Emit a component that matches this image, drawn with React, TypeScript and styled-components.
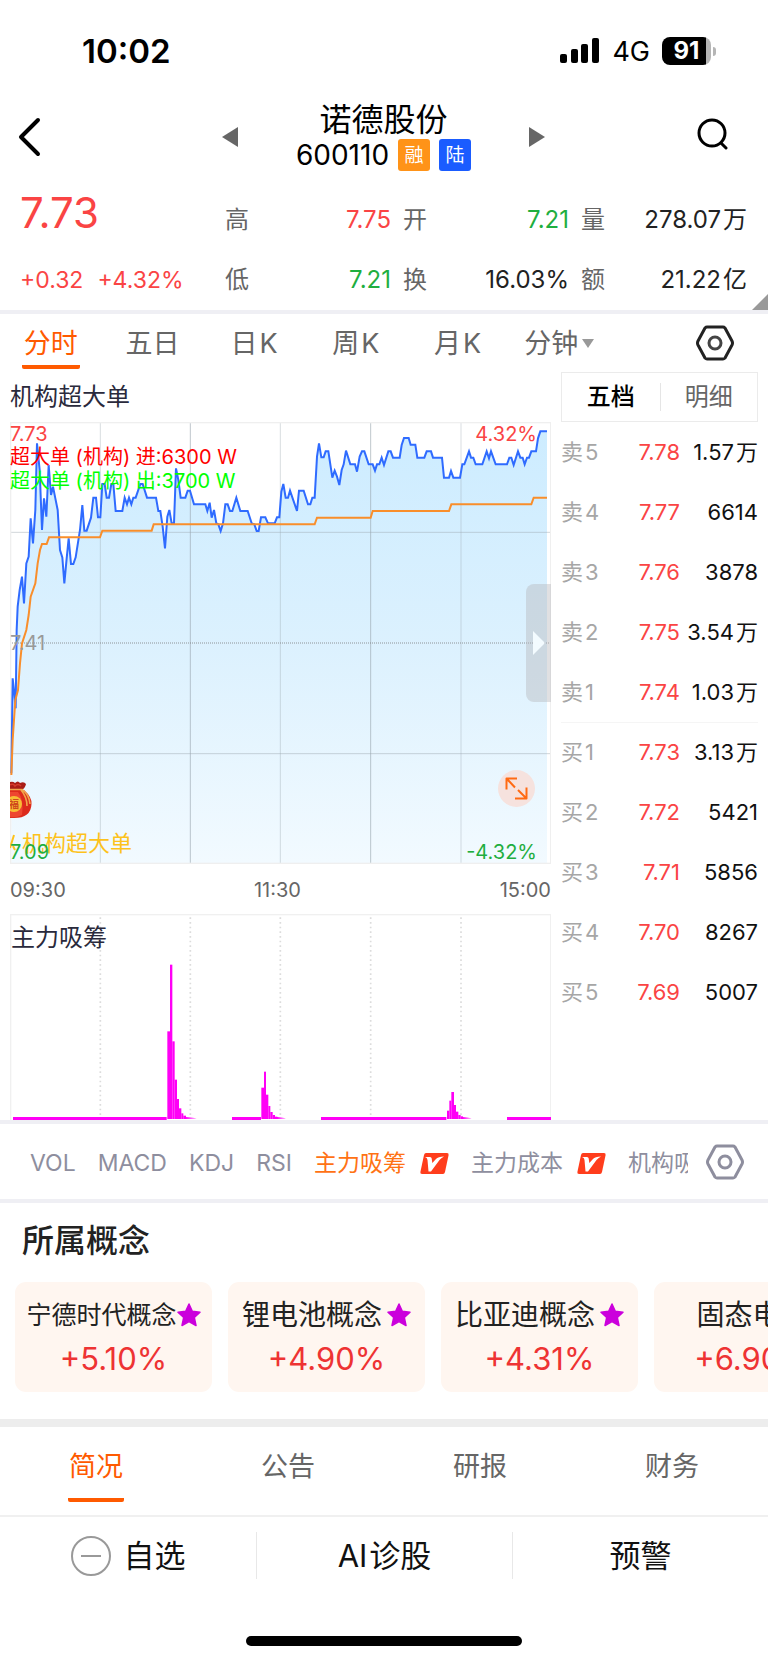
import React from "react";
import styled, { createGlobalStyle, css } from "styled-components";

const RED = "#fa4444";
const GREEN = "#1fae3f";
const ORANGE = "#ff5a00";
const GREY = "#666666";
const LINE = "#efeff4";

const GlobalStyle = createGlobalStyle`
  * { box-sizing: border-box; }
  body {
    margin: 0;
    background: #fff;
    color: #222;
    font-family: Inter, "Noto Sans CJK SC", sans-serif;
    font-size: 24px;
    line-height: 1;
  }
  button {
    border: 0;
    padding: 0;
    background: none;
    font: inherit;
    color: inherit;
    cursor: pointer;
  }
  svg { display: block; flex: none; }
`;

const Page = styled.div`
  display: flex;
  flex-direction: column;
  overflow-x: hidden;
`;

/* ---------- status bar ---------- */

const StatusBar = styled.div`
  display: flex;
  align-items: center;
  justify-content: space-between;
  height: 102px;
  padding: 0 57px 0 82px;
  color: #000;
`;

const Clock = styled.time`
  font-size: 33px;
  font-weight: 600;
`;

const StatusIcons = styled.div`
  display: flex;
  align-items: center;
  gap: 12px;
`;

const Network = styled.span`
  font-size: 27px;
`;

const Battery = styled.span`
  position: relative;
  display: flex;
  align-items: center;
  justify-content: center;
  width: 49px;
  height: 28px;
  border-radius: 8px;
  background: linear-gradient(90deg, #000 44px, #b5b5b5 44px);
  color: #fff;
  font-size: 24px;
  font-weight: 700;

  &::after {
    content: "";
    position: absolute;
    left: 51px;
    top: 10px;
    width: 3px;
    height: 9px;
    border-radius: 0 3px 3px 0;
    background: #b5b5b5;
  }
`;

/* ---------- title bar ---------- */

const TitleBar = styled.header`
  display: grid;
  grid-template-columns: 1fr 324px 1fr;
  align-items: center;
  height: 70px;
  padding: 0 39px 0 18px;
`;

const Stepper = styled.div`
  display: flex;
  align-items: center;
  justify-content: space-between;
  margin-left: 10px;
  margin-right: -10px;
`;

const TitleBlock = styled.div`
  display: flex;
  flex-direction: column;
  align-items: center;
  color: #000;
`;

const StockName = styled.h1`
  margin: 0;
  font-size: 32px;
  font-weight: 400;
  line-height: 36px;
`;

const CodeRow = styled.div`
  display: flex;
  align-items: center;
  gap: 9px;
  height: 34px;
  font-size: 28px;
`;

const Badge = styled.span<{ $color: string }>`
  display: flex;
  align-items: center;
  justify-content: center;
  width: 32px;
  height: 32px;
  border-radius: 3px;
  background: ${(p) => p.$color};
  color: #fff;
  font-size: 19px;
`;

const SearchButton = styled.button`
  justify-self: end;
  padding-bottom: 6px;
`;

/* ---------- quote ---------- */

const Quote = styled.section`
  position: relative;
  display: grid;
  grid-template-columns: 193px repeat(3, minmax(0, 1fr));
  column-gap: 12px;
  padding: 18px 21px 0 20px;
  border-bottom: 4px solid ${LINE};
`;

const PriceBlock = styled.div`
  display: flex;
  flex-direction: column;
  justify-content: space-between;
  color: ${RED};
`;

const Price = styled.strong`
  font-size: 42px;
  font-weight: 400;
  line-height: 46px;
`;

const Change = styled.span`
  display: flex;
  gap: 14px;
  font-size: 23px;
  line-height: 60px;
  white-space: nowrap;
`;

const Stats = styled.dl`
  margin: 0;
`;

const Stat = styled.div`
  display: flex;
  align-items: center;
  justify-content: space-between;
  height: 60px;
`;

const StatLabel = styled.dt`
  color: ${GREY};
`;

const StatValue = styled.dd<{ $color?: string }>`
  margin: 0;
  color: ${(p) => p.$color ?? "#222"};
`;

const Unit = styled.span`
  margin-left: 2px;
`;

const Corner = styled.span`
  position: absolute;
  right: 0;
  bottom: 0;
  border: solid transparent;
  border-width: 16px 0 0 16px;
  border-bottom: 16px solid #999;
  border-top: 0;
`;

/* ---------- period tabs ---------- */

const PeriodBar = styled.nav`
  display: grid;
  grid-template-columns: repeat(6, minmax(0, 1fr)) 124px;
  align-items: start;
  height: 58px;
  padding-right: 34px;
`;

const PeriodTab = styled.button<{ $active?: boolean }>`
  display: flex;
  align-items: center;
  justify-self: center;
  height: 55px;
  padding: 4px 2px 0;
  border-radius: 2px;
  font-size: 27px;
  white-space: nowrap;
  color: ${GREY};
  ${(p) =>
    p.$active &&
    css`
      color: ${ORANGE};
      background: linear-gradient(${ORANGE}, ${ORANGE}) bottom / 100% 4px no-repeat;
    `}
`;

const Caret = styled.span`
  margin-left: 4px;
  border: 6px solid transparent;
  border-top: 9px solid #999;
  border-bottom: 0;
`;

const SettingsButton = styled.button`
  justify-self: end;
  align-self: center;
`;

/* ---------- chart and order book ---------- */

const Main = styled.main`
  display: grid;
  grid-template-columns: minmax(0, 1fr) 197px;
  column-gap: 10px;
  padding: 0 10px;
`;

const ChartLabel = styled.div`
  height: 50px;
  line-height: 50px;
  color: #2a2a3c;
`;

const PriceChart = styled.figure`
  position: relative;
  height: 442px;
  margin: 0;
  overflow: hidden;
`;

const ChartSvg = styled.svg`
  width: 100%;
  height: 100%;
`;

const ChartText = styled.span<{ $color: string; $size?: number }>`
  position: absolute;
  font-size: ${(p) => p.$size ?? 20}px;
  line-height: 24px;
  color: ${(p) => p.$color};
  white-space: nowrap;
`;

const TopLeft = styled(ChartText)`left: 0; top: 0;`;
const InFlow = styled(ChartText)`left: 0; top: 23px;`;
const OutFlow = styled(ChartText)`left: 0; top: 47px;`;
const TopRight = styled(ChartText)`right: 14px; top: 0;`;
const MidLeft = styled(ChartText)`left: 0; top: 209px;`;
const BottomLeft = styled(ChartText)`left: 0; bottom: 0;`;
const BottomRight = styled(ChartText)`right: 14px; bottom: 0;`;
const Signal = styled(ChartText)`left: 12px; bottom: 9px;`;

const SignalMark = styled.svg`
  position: absolute;
  left: 0;
  bottom: 12px;
`;

const LuckyBag = styled.svg`
  position: absolute;
  left: 0;
  top: 359px;
`;

const DrawerHandle = styled.button`
  position: absolute;
  right: 0;
  top: 162px;
  display: flex;
  align-items: center;
  justify-content: center;
  width: 25px;
  height: 118px;
  border-radius: 8px 0 0 8px;
  background: rgba(180, 180, 185, 0.42);
`;

const ExpandButton = styled.button`
  position: absolute;
  right: 16px;
  top: 348px;
  display: flex;
  align-items: center;
  justify-content: center;
  width: 37px;
  height: 37px;
  border-radius: 50%;
  background: #f6e2de;
`;

const TimeAxis = styled.div`
  display: grid;
  grid-template-columns: repeat(3, 1fr);
  height: 50px;
  line-height: 52px;
  font-size: 20px;
  color: ${GREY};

  span:nth-child(2) { text-align: center; margin-right: 6px; }
  span:nth-child(3) { text-align: right; }
`;

const SubChart = styled.figure`
  position: relative;
  height: 206px;
  margin: 0;
`;

const SubChartTitle = styled.figcaption`
  position: absolute;
  left: 1px;
  top: 11px;
  line-height: 26px;
  color: #2a2a3c;
`;

const BookTabs = styled.div`
  display: grid;
  grid-template-columns: 1fr 1fr;
  align-items: center;
  height: 50px;
  border: 1px solid #ebebeb;
`;

const BookTab = styled.button<{ $active?: boolean }>`
  height: 28px;
  line-height: 28px;
  color: ${(p) => (p.$active ? "#000" : GREY)};
  font-weight: ${(p) => (p.$active ? 500 : 400)};

  & + & { border-left: 1px solid #e5e5e5; }
`;

const Book = styled.table`
  width: 100%;
  table-layout: fixed;
  border-collapse: collapse;
  font-size: 22px;

  tr { height: 60px; }
  tr:nth-child(6) { border-top: 1px solid #f5f5f5; }
  th, td { padding: 0; font-weight: 400; white-space: nowrap; }
`;

const Level = styled.th`
  width: 50px;
  text-align: left;
  color: #a6a6a6;
`;

const BookPrice = styled.td`
  width: 69px;
  text-align: right;
  color: ${RED};
`;

const Volume = styled.td`
  text-align: right;
  color: #111;
`;

/* ---------- indicators ---------- */

const IndicatorBar = styled.nav`
  display: flex;
  align-items: center;
  height: 83px;
  padding: 0 24px 0 30px;
  border: solid ${LINE};
  border-width: 4px 0;
`;

const IndicatorList = styled.div`
  display: flex;
  align-items: center;
  flex: 1;
  gap: 22px;
  min-width: 0;
  margin-right: 18px;
  padding-top: 4px;
  overflow: hidden;
`;

const Indicator = styled.button<{ $active?: boolean }>`
  display: flex;
  align-items: center;
  flex: none;
  gap: 14px;
  height: 36px;
  font-size: 23px;
  color: ${(p) => (p.$active ? "#ff7214" : "#8e8e9e")};
`;

/* ---------- concepts ---------- */

const Concepts = styled.section`
  padding: 21px 0 27px;
  border-bottom: 8px solid #ededed;
`;

const SectionTitle = styled.h2`
  margin: 0 22px 24px;
  font-size: 32px;
  font-weight: 500;
  line-height: 34px;
`;

const CardRow = styled.div`
  display: flex;
  gap: 16px;
  padding-left: 15px;
  overflow: hidden;
`;

const Card = styled.a`
  display: flex;
  flex-direction: column;
  align-items: center;
  flex: none;
  width: 197px;
  height: 110px;
  padding-top: 15px;
  border-radius: 11px;
  background: #fff6f0;
  color: #222;
  text-decoration: none;
`;

const CardName = styled.span<{ $compact?: boolean }>`
  display: flex;
  align-items: center;
  justify-content: center;
  gap: ${(p) => (p.$compact ? 0 : 5)}px;
  height: 36px;
  font-size: ${(p) => (p.$compact ? 25 : 28)}px;
  white-space: nowrap;
`;

const CardChange = styled.span`
  line-height: 52px;
  font-size: 31px;
  color: #ee3333;
`;

/* ---------- bottom ---------- */

const InfoTabs = styled.nav`
  display: grid;
  grid-template-columns: repeat(4, 1fr);
  justify-items: center;
  height: 90px;
  border-bottom: 2px solid #f0f0f0;
`;

const InfoTab = styled.button<{ $active?: boolean }>`
  height: 75px;
  padding: 4px 1px 0;
  font-size: 27px;
  color: ${(p) => (p.$active ? ORANGE : GREY)};
  border-radius: 2px;
  background: ${(p) =>
    p.$active ? `linear-gradient(${ORANGE}, ${ORANGE}) bottom / 100% 4px no-repeat` : "none"};
`;

const ActionBar = styled.footer`
  display: grid;
  grid-template-columns: repeat(3, 1fr);
  padding: 15px 0 57px;
`;

const Action = styled.button`
  display: flex;
  align-items: center;
  justify-content: center;
  gap: 13px;
  height: 47px;
  font-size: 31px;
  color: #111;

  & + & { border-left: 1px solid #e8e8e8; }
`;

const HomeIndicator = styled.div`
  align-self: center;
  width: 36%;
  height: 10px;
  margin-bottom: 16px;
  border-radius: 5px;
  background: #000;
`;

/* ---------- drawings ---------- */

const pricePath =
  "34,1390 38,1105 43,1150 47,1195 50,960 53,890 59,840 66,800 72,880 79,760 86,740 92,625 99,700 106,600 111,400 119,480 126,660 132,565 139,620 146,465 153,555 159,530 166,565 173,600 180,720 187,742 193,820 200,745 206,685 213,762 220,762 227,742 240,660 247,585 253,662 260,662 273,623 280,563 288,563 294,622 301,622 307,522 314,522 320,563 327,563 334,522 340,522 347,603 367,603 374,563 381,583 387,563 394,583 400,563 407,563 421,522 428,522 441,563 468,563 475,603 481,603 488,650 495,715 502,620 508,600 515,640 522,640 528,475 535,510 542,563 556,563 563,542 570,542 582,583 616,583 622,603 629,578 635,623 642,600 649,640 655,643 662,663 669,640 676,583 683,583 690,603 697,603 709,563 721,603 743,603 755,640 763,643 770,663 776,663 783,622 796,622 804,640 824,640 831,622 838,622 844,545 850,522 857,563 864,563 870,542 891,603 897,542 911,542 924,583 931,583 937,563 944,563 951,440 957,400 964,442 971,442 977,424 985,424 997,503 1004,482 1011,500 1018,525 1025,480 1031,463 1038,422 1051,463 1065,463 1071,485 1079,440 1086,424 1093,424 1106,463 1118,463 1125,482 1131,463 1138,463 1145,443 1152,465 1165,424 1172,424 1179,443 1199,443 1205,405 1212,384 1226,384 1232,404 1246,404 1252,443 1273,443 1280,424 1293,424 1299,443 1326,443 1332,503 1347,503 1353,483 1360,503 1380,503 1387,463 1393,463 1407,424 1413,443 1420,443 1427,463 1447,463 1460,424 1467,445 1473,424 1487,463 1521,463 1528,443 1534,443 1541,465 1554,424 1561,443 1568,443 1574,463 1581,443 1587,443 1594,424 1608,424 1614,385 1621,364 1641,364";

const averagePath =
  "34,1395 38,1290 46,1170 54,1140 60,1060 66,1000 79,960 86,915 92,860 106,820 113,760 120,720 126,702 140,702 147,682 300,682 307,662 455,662 461,643 944,643 951,623 1112,623 1118,603 1347,603 1354,583 1594,583 1601,563 1641,563";

const columns = [301, 571, 841, 1112, 1383];

const bars: [number, number, number][] = [
  [502, 8, 394], [510, 7, 194], [517, 7, 424], [524, 7, 539], [531, 6, 597],
  [537, 7, 625], [544, 6, 640], [550, 8, 647],
  [784, 8, 563], [792, 6, 515], [798, 7, 584], [805, 6, 618], [811, 7, 636],
  [818, 7, 645], [825, 7, 650],
  [1341, 7, 632], [1348, 6, 602], [1354, 8, 576], [1362, 6, 615], [1368, 7, 635],
  [1375, 7, 645], [1382, 7, 649],
];

const PriceLines = () => (
  <ChartSvg viewBox="30 336 1623 1326" preserveAspectRatio="none" role="img" aria-label="分时走势">
    <defs>
      <linearGradient id="area" x1="0" y1="0" x2="0" y2="1">
        <stop offset="0" stopColor="#cdecff" />
        <stop offset="0.5" stopColor="#dcf1fe" />
        <stop offset="1" stopColor="#f2faff" />
      </linearGradient>
    </defs>
    <polygon points={`${pricePath} 1641,1659 34,1659`} fill="url(#area)" />
    <g stroke="#98a5ad" strokeOpacity="0.45" strokeWidth="3">
      {columns.map((x) => (
        <line key={x} x1={x} x2={x} y1="336" y2="1662" strokeOpacity={x === 571 || x === 1112 ? 0.62 : 0.38} />
      ))}
      <line x1="30" x2="1653" y1="667" y2="667" />
      <line x1="30" x2="1653" y1="1331" y2="1331" />
      <line x1="30" x2="1653" y1="999" y2="999" stroke="#777" strokeOpacity="0.75" strokeDasharray="3 3" />
    </g>
    <rect x="32" y="338" width="1620" height="1322" fill="none" stroke="#efefef" strokeWidth="4" />
    <polyline points={pricePath} fill="none" stroke="#2f6bff" strokeWidth="6" />
    <polyline points={averagePath} fill="none" stroke="#f98e2b" strokeWidth="6" />
  </ChartSvg>
);

const VolumeLines = () => (
  <ChartSvg viewBox="30 42 1623 618" preserveAspectRatio="none" role="img" aria-label="主力吸筹">
    <rect x="32" y="44" width="1620" height="618" fill="none" stroke="#f0f0f0" strokeWidth="4" />
    {columns.map((x) => (
      <line key={x} x1={x} x2={x} y1="52" y2="650" stroke="#dcdcdc" strokeWidth="5" strokeDasharray="5 9" />
    ))}
    <g fill="#ff00f6">
      <rect x="39" y="651" width="461" height="9" />
      <rect x="696" y="651" width="87" height="9" />
      <rect x="963" y="651" width="376" height="9" />
      <rect x="1521" y="651" width="132" height="9" />
      {bars.map(([x, w, y]) => (
        <rect key={x} x={x} y={y} width={w} height={657 - y} />
      ))}
      <path d="M557 651L590 655L557 657ZM831 651L858 655L831 657ZM1388 651L1415 655L1388 657Z" />
    </g>
  </ChartSvg>
);

const HexIcon = ({ color, center = color }: { color: string; center?: string }) => (
  <svg width="38" height="36" viewBox="0 0 38 36" fill="none" strokeWidth="3" strokeLinejoin="round">
    <path d="M11 2H27Q28 2 29 3L36 16Q37 18 36 20L29 33Q28 34 27 34H11Q10 34 9 33L2 20Q1 18 2 16L9 3Q10 2 11 2Z" stroke={color} />
    <circle cx="19" cy="18" r="6" stroke={center} />
  </svg>
);

const VipIcon = () => (
  <svg width="29" height="21" viewBox="0 0 29 21" aria-label="VIP">
    <path d="M6 0H27Q29 0 28.600 2L25 19Q24.500 21 23 21H2Q0 21 .4 19L4 2Q4.500 0 6 0Z" fill="#ff3d1c" />
    <path d="M5 4H10Q11.500 4 11.700 5.500L12.300 10L16 6Q18 3.500 24 3.500Q21 5 19.500 7L11 18.500H8.500L7.500 7Q7.300 4.700 5 4Z" fill="#fff" />
  </svg>
);

const Star = () => (
  <svg width="24" height="24" viewBox="0 0 24 24">
    <path d="M12 1L15.300 8.300L23 9.200L17.300 14.500L19 22.500L12 18.600L5 22.500L6.700 14.500L1 9.200L8.700 8.300Z" fill="#cb00dc" stroke="#cb00dc" strokeWidth="1.500" strokeLinejoin="round" />
  </svg>
);

const Bag = () => (
  <LuckyBag width="22" height="38" viewBox="0 0 22 38">
    <path d="M0 9H14Q22 16 21.500 23Q21 37 4 37H0Z" fill="#dc2a1c" />
    <path d="M0 11H8Q14 18 12 34Q6 37 0 36Z" fill="#ee4630" />
    <path d="M0 1Q3 0 5 2Q8 -1 10 2Q14 0 16 3Q15 8 11 9H0Z" fill="#a91d16" />
    <path d="M0 4Q3 2 5 5Q8 2 11 5" fill="none" stroke="#d63b2c" strokeWidth="1.500" />
    <path d="M0 8.500H12Q19 13 20 23M11 9Q17 16 17 25" fill="none" stroke="#f0a64b" strokeWidth="1.600" />
    <circle cx="4" cy="23" r="8" fill="#f8bd34" />
    <text x="-1" y="27" fontSize="10" fontWeight="700" fill="#cf4a1c">福</text>
  </LuckyBag>
);

/* ---------- data ---------- */

type BookLevel = { side: string; n: number; price: string; volume: string; unit?: string };

const book: BookLevel[] = [
  { side: "卖", n: 5, price: "7.78", volume: "1.57", unit: "万" },
  { side: "卖", n: 4, price: "7.77", volume: "6614" },
  { side: "卖", n: 3, price: "7.76", volume: "3878" },
  { side: "卖", n: 2, price: "7.75", volume: "3.54", unit: "万" },
  { side: "卖", n: 1, price: "7.74", volume: "1.03", unit: "万" },
  { side: "买", n: 1, price: "7.73", volume: "3.13", unit: "万" },
  { side: "买", n: 2, price: "7.72", volume: "5421" },
  { side: "买", n: 3, price: "7.71", volume: "5856" },
  { side: "买", n: 4, price: "7.70", volume: "8267" },
  { side: "买", n: 5, price: "7.69", volume: "5007" },
];

type StatItem = { label: string; value: string; unit?: string; color?: string };

const stats: StatItem[][] = [
  [{ label: "高", value: "7.75", color: RED }, { label: "低", value: "7.21", color: GREEN }],
  [{ label: "开", value: "7.21", color: GREEN }, { label: "换", value: "16.03%" }],
  [{ label: "量", value: "278.07", unit: "万" }, { label: "额", value: "21.22", unit: "亿" }],
];

const concepts = [
  { name: "宁德时代概念", change: "+5.10%", star: true },
  { name: "锂电池概念", change: "+4.90%", star: true },
  { name: "比亚迪概念", change: "+4.31%", star: true },
  { name: "固态电池", change: "+6.90%", star: false },
];

export default function App() {
  return (
    <>
      <GlobalStyle />
      <Page>
        <StatusBar>
          <Clock>10:02</Clock>
          <StatusIcons>
            <svg width="40" height="26" viewBox="0 0 40 26">
              <rect x="0" y="16" width="7" height="9" rx="2" />
              <rect x="11" y="11" width="7" height="14" rx="2" />
              <rect x="21" y="6" width="7" height="19" rx="2" />
              <rect x="32" y="0" width="7" height="25" rx="2" />
            </svg>
            <Network>4G</Network>
            <Battery>91</Battery>
          </StatusIcons>
        </StatusBar>

        <TitleBar>
          <button aria-label="返回">
            <svg width="24" height="40" viewBox="0 0 24 40" fill="none" stroke="#000" strokeWidth="4" strokeLinecap="round" strokeLinejoin="round">
              <path d="M20 3L3 20L20 37" />
            </svg>
          </button>
          <Stepper>
            <button aria-label="上一只">
              <svg width="16" height="20" viewBox="0 0 16 20"><path d="M0 10L16 0V20Z" fill="#666" /></svg>
            </button>
            <TitleBlock>
              <StockName>诺德股份</StockName>
              <CodeRow>
                600110
                <Badge $color="#ff9318">融</Badge>
                <Badge $color="#1a5cff">陆</Badge>
              </CodeRow>
            </TitleBlock>
            <button aria-label="下一只">
              <svg width="16" height="20" viewBox="0 0 16 20"><path d="M16 10L0 0V20Z" fill="#666" /></svg>
            </button>
          </Stepper>
          <SearchButton aria-label="搜索">
            <svg width="32" height="32" viewBox="0 0 32 32" fill="none" stroke="#000" strokeWidth="3" strokeLinecap="round">
              <circle cx="15" cy="15" r="13" />
              <path d="M24 25L29 30" />
            </svg>
          </SearchButton>
        </TitleBar>

        <Quote>
          <PriceBlock>
            <Price>7.73</Price>
            <Change>
              <span>+0.32</span>
              <span>+4.32%</span>
            </Change>
          </PriceBlock>
          {stats.map((pair, i) => (
            <Stats key={i}>
              {pair.map((s) => (
                <Stat key={s.label}>
                  <StatLabel>{s.label}</StatLabel>
                  <StatValue $color={s.color}>
                    {s.value}
                    {s.unit && <Unit>{s.unit}</Unit>}
                  </StatValue>
                </Stat>
              ))}
            </Stats>
          ))}
          <Corner />
        </Quote>

        <PeriodBar>
          <PeriodTab $active>分时</PeriodTab>
          <PeriodTab>五日</PeriodTab>
          <PeriodTab>日<Unit>K</Unit></PeriodTab>
          <PeriodTab>周<Unit>K</Unit></PeriodTab>
          <PeriodTab>月<Unit>K</Unit></PeriodTab>
          <PeriodTab>分钟<Caret /></PeriodTab>
          <SettingsButton aria-label="图表设置">
            <HexIcon color="#222" center="#444" />
          </SettingsButton>
        </PeriodBar>

        <Main>
          <div>
            <ChartLabel>机构超大单</ChartLabel>
            <PriceChart>
              <PriceLines />
              <Bag />
              <TopLeft $color={RED}>7.73</TopLeft>
              <InFlow $color="#ff0000">超大单 (机构) 进:6300 W</InFlow>
              <OutFlow $color="#00ff00">超大单 (机构) 出:3700 W</OutFlow>
              <TopRight $color={RED}>4.32%</TopRight>
              <MidLeft $color="#999">7.41</MidLeft>
              <Signal $color="#fdc21c" $size={22}>机构超大单</Signal>
              <SignalMark width="6" height="18" viewBox="0 0 6 18" fill="none" stroke="#fdc21c" strokeWidth="2">
                <path d="M4 1L0 14M3 12L5 16" />
              </SignalMark>
              <BottomLeft $color={GREEN}>7.09</BottomLeft>
              <BottomRight $color={GREEN}>-4.32%</BottomRight>
              <DrawerHandle aria-label="收起盘口">
                <svg width="12" height="24" viewBox="0 0 12 24"><path d="M0 0L12 12L0 24Z" fill="#f3fbff" /></svg>
              </DrawerHandle>
              <ExpandButton aria-label="全屏">
                <svg width="23" height="23" viewBox="0 0 23 23" fill="none" stroke="#ff6a13" strokeWidth="2" strokeLinejoin="round">
                  <path d="M12 1.500H1.500V12.500M2 2L10 10.500M10 21.500H21.500V10.500M21 21L13 13" />
                </svg>
              </ExpandButton>
            </PriceChart>
            <TimeAxis>
              <span>09:30</span>
              <span>11:30</span>
              <span>15:00</span>
            </TimeAxis>
            <SubChart>
              <VolumeLines />
              <SubChartTitle>主力吸筹</SubChartTitle>
            </SubChart>
          </div>

          <aside>
            <BookTabs>
              <BookTab $active>五档</BookTab>
              <BookTab>明细</BookTab>
            </BookTabs>
            <Book>
              <tbody>
                {book.map((r) => (
                  <tr key={r.side + r.n}>
                    <Level scope="row">{r.side}<Unit>{r.n}</Unit></Level>
                    <BookPrice>{r.price}</BookPrice>
                    <Volume>
                      {r.volume}
                      {r.unit && <Unit>{r.unit}</Unit>}
                    </Volume>
                  </tr>
                ))}
              </tbody>
            </Book>
          </aside>
        </Main>

        <IndicatorBar>
          <IndicatorList>
            <Indicator>VOL</Indicator>
            <Indicator>MACD</Indicator>
            <Indicator>KDJ</Indicator>
            <Indicator>RSI</Indicator>
            <Indicator $active>主力吸筹<VipIcon /></Indicator>
            <Indicator>主力成本<VipIcon /></Indicator>
            <Indicator>机构吸筹</Indicator>
          </IndicatorList>
          <button aria-label="指标设置">
            <HexIcon color="#8e8e9e" />
          </button>
        </IndicatorBar>

        <Concepts>
          <SectionTitle>所属概念</SectionTitle>
          <CardRow>
            {concepts.map((c) => (
              <Card key={c.name} href="#">
                <CardName $compact={c.name.length > 5}>
                  {c.name}
                  {c.star && <Star />}
                </CardName>
                <CardChange>{c.change}</CardChange>
              </Card>
            ))}
          </CardRow>
        </Concepts>

        <InfoTabs>
          <InfoTab $active>简况</InfoTab>
          <InfoTab>公告</InfoTab>
          <InfoTab>研报</InfoTab>
          <InfoTab>财务</InfoTab>
        </InfoTabs>

        <ActionBar>
          <Action>
            <svg width="40" height="40" viewBox="0 0 40 40" fill="none" stroke="#999" strokeWidth="2">
              <circle cx="20" cy="20" r="19" />
              <path d="M10 20H30" />
            </svg>
            自选
          </Action>
          <Action>
            <span>AI<Unit>诊股</Unit></span>
          </Action>
          <Action>预警</Action>
        </ActionBar>
        <HomeIndicator />
      </Page>
    </>
  );
}
